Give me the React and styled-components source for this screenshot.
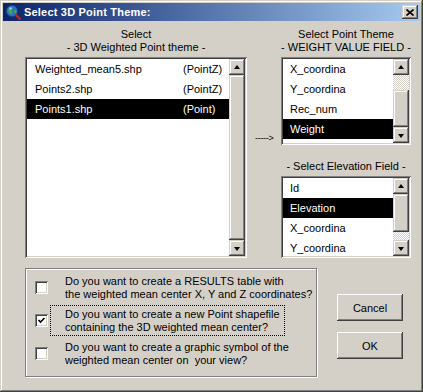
import React from "react";
import styled, { createGlobalStyle, css } from "styled-components";

const GlobalStyle = createGlobalStyle`
  html, body {
    margin: 0;
    padding: 0;
    background: #d4d0c8;
  }
  body {
    font-family: "Liberation Sans", Arial, sans-serif;
    font-size: 11px;
    color: #000;
  }
`;

const raised = css`
  background: #d4d0c8;
  box-shadow: inset -1px -1px #404040, inset 1px 1px #d4d0c8,
    inset -2px -2px #808080, inset 2px 2px #fff;
`;

const sunken = css`
  background: #fff;
  box-shadow: inset 1px 1px #808080, inset -1px -1px #fff,
    inset 2px 2px #404040, inset -2px -2px #d4d0c8;
`;

const dither = css`
  background-color: #d4d0c8;
  background-image: repeating-conic-gradient(#fff 0 25%, #d4d0c8 0 50%);
  background-size: 2px 2px;
`;

const Window = styled.div`
  width: 423px;
  height: 392px;
  box-sizing: border-box;
  padding: 3px;
  background: #d4d0c8;
  box-shadow: inset -1px -1px #404040, inset 1px 1px #d4d0c8,
    inset -2px -2px #808080, inset 2px 2px #fff;
  display: flex;
  flex-direction: column;
`;

const TitleBar = styled.div`
  height: 18px;
  display: flex;
  align-items: center;
  padding: 0 2px;
  background: linear-gradient(to right, #0a246a, #a6caf0);
  color: #fff;
  font-weight: bold;
  font-size: 11px;
`;

const TitleText = styled.span`
  flex: 1;
  margin-left: 3px;
  letter-spacing: 0.2px;
`;

const CloseButton = styled.div`
  ${raised};
  width: 16px;
  height: 14px;
  display: flex;
  align-items: center;
  justify-content: center;
`;

const Content = styled.div`
  padding: 7px 0 0 22px;
  display: flex;
  flex-direction: column;
`;

const TopRow = styled.div`
  display: flex;
`;

const Column = styled.div`
  display: flex;
  flex-direction: column;
  width: ${(p) => p.$w}px;
`;

const Heading = styled.div`
  text-align: center;
  line-height: 13px;
  white-space: nowrap;
  margin-top: ${(p) => p.$top || 0}px;
`;

const ListBox = styled.div`
  ${sunken};
  margin-top: 3px;
  height: ${(p) => p.$h}px;
  box-sizing: border-box;
  padding: 2px;
  display: flex;
  overflow: hidden;
`;

const Rows = styled.div`
  flex: 1;
  overflow: hidden;
`;

const Row = styled.div`
  height: 20px;
  line-height: 20px;
  display: flex;
  padding-left: ${(p) => p.$pad}px;
  white-space: nowrap;
  background: ${(p) => (p.$sel ? "#000" : "transparent")};
  color: ${(p) => (p.$sel ? "#fff" : "#000")};
`;

const NameCell = styled.span`
  width: 148px;
`;

const ScrollBar = styled.div`
  width: 16px;
  display: flex;
  flex-direction: column;
`;

const ArrowButton = styled.div`
  ${raised};
  height: 16px;
  flex: none;
  display: flex;
  align-items: center;
  justify-content: center;
  &::after {
    content: "";
    width: 0;
    height: 0;
    border-left: 3.5px solid transparent;
    border-right: 3.5px solid transparent;
    ${(p) =>
      p.$down
        ? "border-top: 4px solid #000; margin-top: 1px;"
        : "border-bottom: 4px solid #000; margin-top: -1px;"}
  }
`;

const Track = styled.div`
  ${dither};
  flex: 1;
  display: flex;
  flex-direction: column;
`;

const Thumb = styled.div`
  ${raised};
  margin-top: ${(p) => p.$offset}px;
  height: ${(p) => (p.$size ? `${p.$size}px` : "auto")};
  flex: ${(p) => (p.$size ? "none" : "1")};
`;

const ArrowCol = styled.div`
  width: 34px;
  padding: 105px 0 0 8px;
  box-sizing: border-box;
  font-size: 9px;
  line-height: 10px;
  letter-spacing: -0.3px;
  white-space: nowrap;
`;

const BottomRow = styled.div`
  display: flex;
  margin-top: 10px;
`;

const GroupBox = styled.div`
  width: 292px;
  height: 109px;
  box-sizing: border-box;
  border: 1px solid #808080;
  box-shadow: 1px 1px 0 #fff, inset 1px 1px 0 #fff;
  padding: 3px 0 0 9px;
  display: flex;
  flex-direction: column;
  gap: 2px;
`;

const CheckRow = styled.div`
  display: flex;
  align-items: center;
`;

const CheckBox = styled.div`
  ${sunken};
  width: 13px;
  height: 13px;
  flex: none;
  display: flex;
  align-items: center;
  justify-content: center;
`;

const CheckLabel = styled.div`
  margin-left: 2px;
  padding: 2px 4px 1px 14px;
  border: 1px dotted ${(p) => (p.$focus ? "#000" : "transparent")};
  line-height: 13px;
  white-space: pre;
`;

const ButtonCol = styled.div`
  display: flex;
  flex-direction: column;
  gap: 11px;
  margin-left: 20px;
  padding-top: 26px;
`;

const Button = styled.div`
  width: 66px;
  height: 27px;
  box-sizing: border-box;
  background: #d4d0c8;
  box-shadow: inset -1px -1px #404040, inset 1px 1px #fff,
    inset -2px -2px #808080, inset 2px 2px #d4d0c8;
  display: flex;
  align-items: center;
  justify-content: center;
`;

function GlobeIcon() {
  return (
    <svg width="16" height="16" viewBox="0 0 16 16">
      <circle cx="7" cy="7" r="6" fill="#2a6fd0" stroke="#1b2f6e" strokeWidth="1.2" />
      <path d="M4 3.5 L7 3 L8 5 L6.5 7 L7.5 9 L5.5 10.5 L4 8.5 L3 6 Z" fill="#3fae3f" />
      <path d="M9 6.5 L11 6 L11.5 8.5 L9.5 9.5 Z" fill="#3fae3f" />
      <circle cx="5.5" cy="4.5" r="1" fill="#bfe3ff" />
      <path d="M11 11 L15 15" stroke="#b02a20" strokeWidth="2.4" strokeLinecap="round" />
    </svg>
  );
}

function CloseGlyph() {
  return (
    <svg width="8" height="7" viewBox="0 0 8 7">
      <path d="M0.5 0.5 L7.5 6.5 M7.5 0.5 L0.5 6.5" stroke="#000" strokeWidth="1.6" />
    </svg>
  );
}

function CheckGlyph() {
  return (
    <svg width="9" height="9" viewBox="0 0 9 9">
      <path d="M1.5 4 L3.5 6 L7.5 2" fill="none" stroke="#000" strokeWidth="1.6" />
    </svg>
  );
}

function Scroll({ offset, size }) {
  return (
    <ScrollBar>
      <ArrowButton />
      <Track>
        <Thumb $offset={offset} $size={size} />
      </Track>
      <ArrowButton $down />
    </ScrollBar>
  );
}

const themes = [
  { name: "Weighted_mean5.shp", type: "(PointZ)" },
  { name: "Points2.shp", type: "(PointZ)" },
  { name: "Points1.shp", type: "(Point)", sel: true },
];

const weightFields = ["X_coordina", "Y_coordina", "Rec_num", "Weight"];
const elevationFields = ["Id", "Elevation", "X_coordina", "Y_coordina"];

const questions = [
  {
    lines: [
      "Do you want to create a RESULTS table with",
      "the weighted mean center X, Y and Z coordinates?",
    ],
  },
  {
    lines: [
      "Do you want to create a new Point shapefile",
      "containing the 3D weighted mean center?",
    ],
    checked: true,
    focus: true,
  },
  {
    lines: [
      "Do you want to create a graphic symbol of the",
      "weighted mean center on  your view?",
    ],
  },
];

export default function App() {
  return (
    <>
      <GlobalStyle />
      <Window>
        <TitleBar>
          <GlobeIcon />
          <TitleText>Select 3D Point Theme:</TitleText>
          <CloseButton>
            <CloseGlyph />
          </CloseButton>
        </TitleBar>

        <Content>
          <TopRow>
            <Column $w={222}>
              <Heading>
                Select
                <br />- 3D Weighted Point theme -
              </Heading>
              <ListBox $h={201}>
                <Rows>
                  {themes.map((t) => (
                    <Row key={t.name} $pad={8} $sel={t.sel}>
                      <NameCell>{t.name}</NameCell>
                      <span>{t.type}</span>
                    </Row>
                  ))}
                </Rows>
                <Scroll offset={0} />
              </ListBox>
            </Column>

            <ArrowCol>-----&gt;</ArrowCol>

            <Column $w={130}>
              <Heading>
                Select Point Theme
                <br />- WEIGHT VALUE FIELD -
              </Heading>
              <ListBox $h={88}>
                <Rows>
                  {weightFields.map((f) => (
                    <Row key={f} $pad={7} $sel={f === "Weight"}>
                      {f}
                    </Row>
                  ))}
                </Rows>
                <Scroll offset={15} size={37} />
              </ListBox>

              <Heading $top={15}>- Select Elevation Field -</Heading>
              <ListBox $h={82}>
                <Rows>
                  {elevationFields.map((f) => (
                    <Row key={f} $pad={7} $sel={f === "Elevation"}>
                      {f}
                    </Row>
                  ))}
                </Rows>
                <Scroll offset={0} size={38} />
              </ListBox>
            </Column>
          </TopRow>

          <BottomRow>
            <GroupBox>
              {questions.map((q, i) => (
                <CheckRow key={i}>
                  <CheckBox>{q.checked && <CheckGlyph />}</CheckBox>
                  <CheckLabel $focus={q.focus}>
                    {q.lines.join("\n")}
                  </CheckLabel>
                </CheckRow>
              ))}
            </GroupBox>
            <ButtonCol>
              <Button>Cancel</Button>
              <Button>OK</Button>
            </ButtonCol>
          </BottomRow>
        </Content>
      </Window>
    </>
  );
}
